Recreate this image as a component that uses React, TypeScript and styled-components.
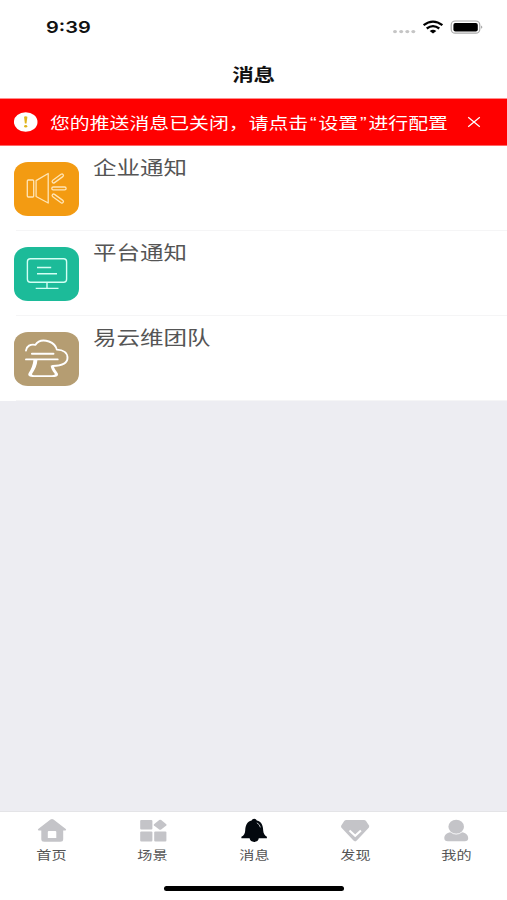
import React from "react";
import styled, { createGlobalStyle } from "styled-components";

const GlobalStyle = createGlobalStyle`
  * { box-sizing: border-box; }
  body { margin: 0; background: #fff; font-family: "Noto Sans", "Noto Sans CJK SC", sans-serif; }
  svg { display: block; flex: none; }
`;

const Screen = styled.div`
  width: 507px;
  height: 900px;
  display: flex;
  flex-direction: column;
  overflow: hidden;
  background: #ededf2;
`;

/* Wide lettering: glyphs are drawn 22% wider than tall. */
const Wide = styled.span<{ $size: number; $origin?: string; $weight?: number; $color?: string }>`
  display: block;
  white-space: nowrap;
  font-family: "Noto Sans CJK SC", sans-serif;
  font-size: ${(p) => p.$size}px;
  font-weight: ${(p) => p.$weight ?? 400};
  color: ${(p) => p.$color ?? "#555"};
  line-height: 24px;
  transform: scaleX(1.22);
  transform-origin: ${(p) => p.$origin ?? "left"} center;
`;

const Quote = styled.span`
  font-family: "Liberation Sans", sans-serif;
  display: inline-block;
  width: 8.4px;
  text-align: center;
`;

const StatusBar = styled.header`
  height: 54px;
  flex: none;
  display: flex;
  justify-content: space-between;
  padding: 15px 23px 0 46px;
  background: #fff;
`;

const Clock = styled(Wide)`
  font-family: Inter, sans-serif;
`;

const NavBar = styled.div`
  height: 44px;
  flex: none;
  display: flex;
  justify-content: center;
  padding: 8px 0 0 1px;
  background: #fff;
`;

const Banner = styled.div`
  height: 48px;
  flex: none;
  display: flex;
  align-items: center;
  background: #f00;
  border-top: 1px solid #ff8d8d;
  border-bottom: 1px solid #ff6767;
  padding: 0 26px 0 14px;
`;

const BannerText = styled.div`
  flex: 1;
  padding-left: 12px;
`;

const List = styled.main`
  flex: none;
  background: #fff;
`;

const Row = styled.section`
  height: 85.1px;
  display: flex;
  gap: 13.5px;
  padding: 16px 0 0 13.5px;
  background: linear-gradient(#f5f5f6, #f5f5f6) 16px 100% / 100% 1px no-repeat;
`;

const RowLabel = styled.div`
  margin-top: -7px;
`;

const Tile = styled.div<{ $color: string }>`
  width: 65.5px;
  height: 53.5px;
  border-radius: 14px / 12px;
  background: ${(p) => p.$color};
`;

const Spacer = styled.div`
  flex: 1;
`;

const TabBar = styled.nav`
  height: 89px;
  flex: none;
  display: flex;
  flex-direction: column;
  align-items: center;
  padding-left: 1px;
  background: #fff;
  border-top: 1px solid #e4e4e7;
`;

const Tabs = styled.div`
  width: 100%;
  height: 74px;
  display: grid;
  grid-template-columns: repeat(5, 1fr);
`;

const Tab = styled.div`
  display: flex;
  flex-direction: column;
  align-items: center;
  padding-top: 6px;
`;

const HomeIndicator = styled.div`
  width: 180px;
  height: 5px;
  border-radius: 3px;
  background: #000;
`;

const StatusIcons = () => (
  <svg width="94" height="26" viewBox="390 15 94 26">
    <g fill="#c5c5c5">
      {[395, 401.2, 407.3, 413.3].map((x) => (
        <ellipse key={x} cx={x} cy="31.6" rx="2" ry="1.7" />
      ))}
    </g>
    <g fill="none" stroke="#000" strokeWidth="2.3">
      <path d="M423.6 25.2Q433 18 442.4 25.2" />
      <path d="M426.7 28.5Q433 23.8 439.3 28.5" />
    </g>
    <path d="M429.7 30.9Q433 28.5 436.3 30.9L433 33.4Z" />
    <rect x="451.2" y="21" width="28.6" height="12.2" rx="4" fill="#fff" stroke="#aaa" strokeWidth="1.2" />
    <rect x="453.4" y="22.9" width="24.4" height="8.5" rx="2" />
    <path d="M481.2 25.4Q483.4 27.1 481.2 28.8Z" fill="#999" />
  </svg>
);

const SpeakerArt = () => (
  <svg width="66" height="54" viewBox="13.5 162 66 54" fill="none" stroke="#ffe5b5" strokeWidth="1.3" strokeLinejoin="round">
    <rect x="26.8" y="180" width="6.4" height="17" rx="1" />
    <path d="M35.6 180.6L47.7 173.5V203L35.6 196.5Z" />
    <rect x="51.3" y="187" width="14.3" height="2.8" rx="1.4" />
    <rect x="50.7" y="176.9" width="13.2" height="3" rx="1.5" transform="rotate(-36 57.3 178.4)" />
    <rect x="50.7" y="197.1" width="13.2" height="3" rx="1.5" transform="rotate(36 57.3 198.6)" />
  </svg>
);

const MonitorArt = () => (
  <svg width="66" height="54" viewBox="13.5 247 66 54" fill="none" stroke="#d3fff4" strokeWidth="1.4">
    <rect x="26.9" y="258.7" width="39.2" height="23.5" rx="3" />
    <path d="M36.5 267.5H50.7M36.5 273.8H56.5M46.5 282.3V288.3M35.2 288.4H58" />
  </svg>
);

const CloudArt = () => (
  <svg width="66" height="54" viewBox="13.5 332 66 54" fill="none" stroke="#fff" strokeWidth="1.9" strokeLinecap="round" strokeLinejoin="round">
    <path d="M25.5 350.5C26 346.2 30 343.8 34.8 344.9C38 340 43.5 339.8 48.5 341.5C53 343.2 55.6 346.5 56.3 349.6C63 349.7 67 353 67 357.8C67 363 61.2 365.8 52.2 366" />
    <path d="M31.4 353.8H53M25.5 359.4H57.2" />
    <path d="M33 359.5H37C36.6 365.5 34.2 370 31.6 373.8Q31 375.2 33.5 375.2H51.5Q55 375.2 54.2 373.8C51.6 370.6 50.2 367.5 50.2 365.4H53C53.8 368.5 55.8 370.8 57.2 373.2C58.4 375.6 56.2 377 53 377H33.5C29 377 26.8 375.6 28.2 373C30.8 369 32.6 365 33 359.5Z" fill="#fff" stroke="none" />
    <path d="M51.3 360V366" stroke="none" />
  </svg>
);

const AlertIcon = () => (
  <svg width="24" height="20" viewBox="0 0 24 20">
    <ellipse cx="11.7" cy="10" rx="11.8" ry="9.8" fill="#fff" />
    <path d="M10 4.7Q11.7 3.8 13.4 4.7L12.5 11.6H10.9Z" fill="#dfb51c" />
    <ellipse cx="11.7" cy="14.3" rx="1.6" ry="1.2" fill="#dfb51c" />
  </svg>
);

const CloseIcon = () => (
  <svg width="14" height="12" viewBox="0 0 14 12" stroke="#fff" strokeWidth="1.2">
    <path d="M1.2 1.2L12.8 10.8M12.8 1.2L1.2 10.8" />
  </svg>
);

const tabs = [
  {
    label: "首页",
    art: (
      <path
        fill="#c4c4c8"
        fillRule="evenodd"
        d="M15 1Q15.8 1 16.5 1.6L28.8 11.1Q29.8 12.3 28.3 12.4H26.2V21.2Q26.2 23.7 23.2 23.7H7.3Q4.3 23.7 4.3 21.2V12.4H1.7Q.2 12.3 1.2 11.1L13.5 1.6Q14.2 1 15 1ZM11.8 13Q10.8 13 10.8 14V20.1H19.3V14Q19.3 13 18.3 13Z"
      />
    ),
  },
  {
    label: "场景",
    art: (
      <g fill="#c4c4c8">
        <rect x="2.2" y="2" width="12.2" height="9.6" rx="1" />
        <rect x="2.2" y="13.6" width="12.2" height="9.8" rx="1" />
        <rect x="16.2" y="13.6" width="12.2" height="9.8" rx="1" />
        <path d="M21.2 2.1Q22.2 1.5 23.2 2.1L28.3 6.2Q29 6.9 28.3 7.6L23.2 11.5Q22.2 12.1 21.2 11.5L16 7.6Q15.3 6.9 16 6.2Z" />
      </g>
    ),
  },
  {
    label: "消息",
    art: (
      <>
        <path
          fill="#03080e"
          d="M15.2 .8Q17.2 .8 17.8 2.4C22.6 3.5 24 7.4 24.2 12.4C24.3 15.5 25.8 17.2 27.9 18.8V20.3H19.8Q19.2 23.8 15.2 23.9Q11.2 23.8 10.6 20.3H2.4V18.8C5 17.2 6.1 15.5 6.2 12.4C6.4 7.4 8 3.5 12.6 2.4Q13.2 .8 15.2 .8Z"
        />
        <path d="M18.2 5Q20.8 6.3 21.3 9" fill="none" stroke="#dfe2e6" strokeWidth=".8" strokeLinecap="round" />
      </>
    ),
  },
  {
    label: "发现",
    art: (
      <>
        <path
          fill="#c4c4c8"
          d="M6.3 2H24Q25.2 2 26 2.9L29 7.5Q29.6 8.7 28.7 9.8L16.8 22.6Q15.2 24.2 13.5 22.6L1.5 9.8Q.6 8.7 1.3 7.5L4.2 2.9Q5 2 6.3 2Z"
        />
        <path d="M9.5 12.4L15.2 17.8L20.9 12.4" fill="none" stroke="#fff" strokeWidth="2" />
      </>
    ),
  },
  {
    label: "我的",
    art: (
      <>
        <path
          fill="#c4c4c8"
          d="M9.5 14.2Q15.2 18.4 21 14.2C24.7 14.6 27.2 17 27.2 20.2Q27.2 23.2 23.8 23.2H6.8Q3.3 23.2 3.3 20.2C3.3 17 5.8 14.6 9.5 14.2Z"
        />
        <ellipse cx="15.2" cy="8.8" rx="7.8" ry="7" fill="#c4c4c8" />
        <path d="M9.3 13.9Q15.2 18.6 21.2 13.9" fill="none" stroke="#ededf0" strokeWidth=".8" />
      </>
    ),
  },
];

const rows = [
  { label: "企业通知", color: "#f39b12", art: <SpeakerArt /> },
  { label: "平台通知", color: "#1cbb99", art: <MonitorArt /> },
  { label: "易云维团队", color: "#b59d72", art: <CloudArt /> },
];

export default function App() {
  return (
    <Screen>
      <GlobalStyle />
      <StatusBar>
        <Clock $size={16.4} $weight={600} $color="#111">9:39</Clock>
        <StatusIcons />
      </StatusBar>
      <NavBar>
        <Wide $size={17.6} $weight={700} $origin="center" $color="#111">消息</Wide>
      </NavBar>
      <Banner>
        <AlertIcon />
        <BannerText>
          <Wide $size={16.3} $color="#fff">
            您的推送消息已关闭，请点击<Quote>“</Quote>设置<Quote>”</Quote>进行配置
          </Wide>
        </BannerText>
        <CloseIcon />
      </Banner>
      <List>
        {rows.map((row) => (
          <Row key={row.label}>
            <Tile $color={row.color}>{row.art}</Tile>
            <RowLabel>
              <Wide $size={19.3}>{row.label}</Wide>
            </RowLabel>
          </Row>
        ))}
      </List>
      <Spacer />
      <TabBar>
        <Tabs>
          {tabs.map((tab) => (
            <Tab key={tab.label}>
              <svg width="30" height="25" viewBox="0 0 30 25">{tab.art}</svg>
              <Wide $size={12.4} $origin="center">{tab.label}</Wide>
            </Tab>
          ))}
        </Tabs>
        <HomeIndicator />
      </TabBar>
    </Screen>
  );
}
